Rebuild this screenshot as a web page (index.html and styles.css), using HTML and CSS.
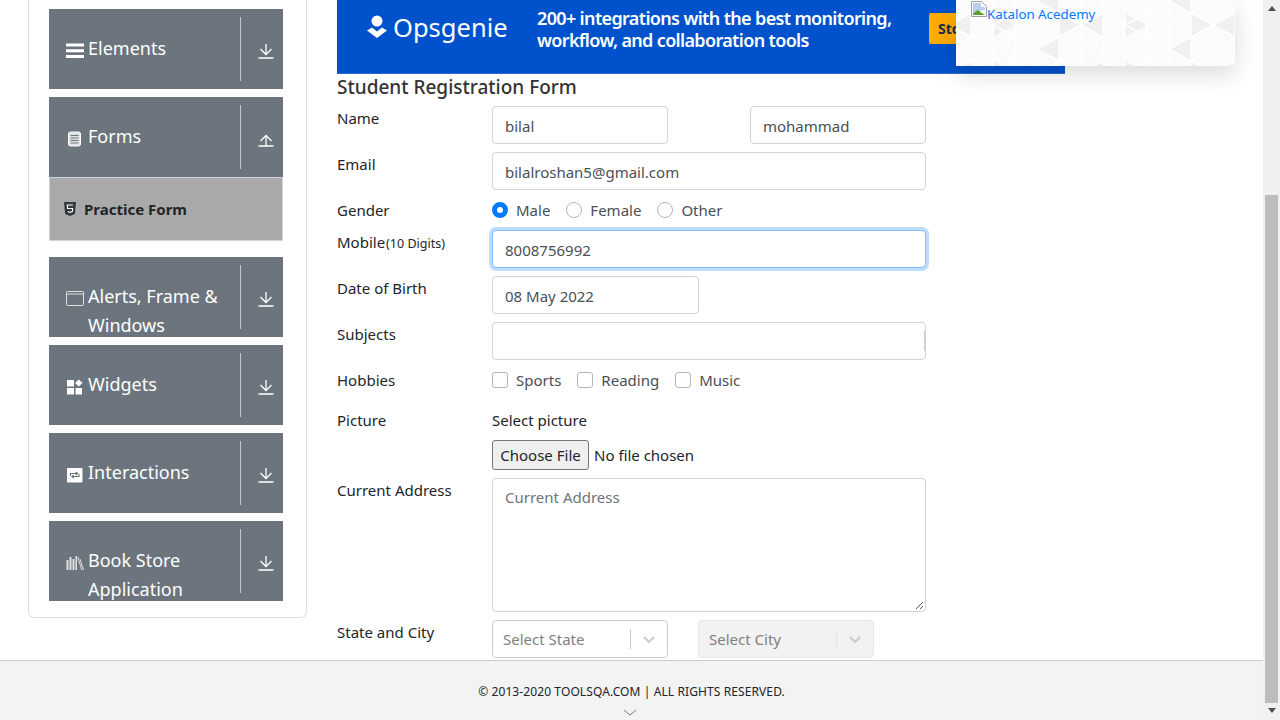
FILE: index.html
```html
<!DOCTYPE html>
<html lang="en">
<head>
  <meta charset="UTF-8">
  <title>Student Registration Form</title>
  <link rel="stylesheet" href="styles.css">
</head>
<body>
  <div class="page">
    <div class="content">
      <aside class="sidebar">
        <div class="menu">
          <div class="group">
            <svg class="group-icon" viewBox="0 0 18 16"><path d="M0 .5h18v3H0zM0 6.200h18v3H0zM0 12h18v3H0z" fill="#fff"/></svg>
            <span class="group-title">Elements</span>
            <div class="group-toggle"><svg viewBox="0 0 16 16"><path d="M8 1v10.500M2.500 6l5.500 5.500L13.500 6M.5 15h15" fill="none" stroke="#fff" stroke-width="1.300"/></svg></div>
          </div>
          <div class="group">
            <svg class="group-icon" viewBox="0 0 18 16"><rect x="2.500" y="1" width="12" height="14" rx="2" fill="#dfe1e3" stroke="#fff"/><path d="M4.500 4.500h8M4.500 7h8M4.500 9.500h8M4.500 12h8" stroke="#6c757d"/></svg>
            <span class="group-title">Forms</span>
            <div class="group-toggle"><svg viewBox="0 0 16 16"><path d="M8 15V4.500M2.500 10 8 4.500l5.500 5.500M.5 15h15" fill="none" stroke="#fff" stroke-width="1.300"/></svg></div>
          </div>
          <div class="subitem">
            <svg class="subitem-icon" viewBox="0 0 12 14"><path d="M0 0h12l-1.100 12L6 14l-4.900-2z" fill="#343a40"/><path d="M9 3H3.300l.3 3.500h5l-.3 3L6 10.500l-2.200-1" fill="none" stroke="#fff" stroke-width="1.100"/></svg>
            <span>Practice Form</span>
          </div>
          <div class="group group-gap">
            <svg class="group-icon" viewBox="0 0 18 16"><rect x=".5" y=".5" width="17" height="14" rx="1" fill="none" stroke="#dfe1e3"/><path d="M.5 3h17" stroke="#dfe1e3"/></svg>
            <span class="group-title">Alerts, Frame &amp; Windows</span>
            <div class="group-toggle"><svg viewBox="0 0 16 16"><path d="M8 1v10.500M2.500 6l5.500 5.500L13.500 6M.5 15h15" fill="none" stroke="#fff" stroke-width="1.300"/></svg></div>
          </div>
          <div class="group">
            <svg class="group-icon" viewBox="0 0 18 16"><path d="M1 1h7v6.500H1zM1 9h7v6.500H1zM9.500 9H16v6.500H9.500zM12.800 .5l3.700 3.500-3.700 3.500L9 4z" fill="#fff"/></svg>
            <span class="group-title">Widgets</span>
            <div class="group-toggle"><svg viewBox="0 0 16 16"><path d="M8 1v10.500M2.500 6l5.500 5.500L13.500 6M.5 15h15" fill="none" stroke="#fff" stroke-width="1.300"/></svg></div>
          </div>
          <div class="group">
            <svg class="group-icon" viewBox="0 0 18 16"><rect x="1" y="1" width="15.500" height="14.500" rx="1" fill="#fff"/><path d="M4.500 9V6.500h7M9.800 5l1.800 1.500L9.800 8M13 7v2.500H6M7.700 8 6 9.500 7.700 11" fill="none" stroke="#6c757d" stroke-width="1.100"/></svg>
            <span class="group-title">Interactions</span>
            <div class="group-toggle"><svg viewBox="0 0 16 16"><path d="M8 1v10.500M2.500 6l5.500 5.500L13.500 6M.5 15h15" fill="none" stroke="#fff" stroke-width="1.300"/></svg></div>
          </div>
          <div class="group">
            <svg class="group-icon" viewBox="0 0 18 16"><path d="M.5 5h2v10h-2zM3.500 2h2v13h-2zM6.500 4h2v11h-2zM9.500 1h1.500v14H9.500z" fill="#dfe1e3"/><path d="M11.800 2l4 13M14 4l3.500 11" stroke="#dfe1e3"/></svg>
            <span class="group-title">Book Store Application</span>
            <div class="group-toggle"><svg viewBox="0 0 16 16"><path d="M8 1v10.500M2.500 6l5.500 5.500L13.500 6M.5 15h15" fill="none" stroke="#fff" stroke-width="1.300"/></svg></div>
          </div>
        </div>
      </aside>

      <main class="main">
        <div class="ad">
          <div class="ad-logo">
            <svg viewBox="0 0 20 23"><circle cx="10" cy="6" r="5.500" fill="#fff"/><path d="M0 15.500l5-3 5 4 5-4 5 3-10 7.500z" fill="#fff"/></svg>
            <span>Opsgenie</span>
          </div>
          <div class="ad-text">200+ integrations with the best monitoring,<br>workflow, and collaboration tools</div>
          <div class="ad-button">Stop</div>
        </div>

        <h1 class="form-title">Student Registration Form</h1>

        <form class="form">
          <div class="row">
            <label class="row-label">Name</label>
            <div class="field-pair">
              <input class="input" type="text" value="bilal">
              <input class="input" type="text" value="mohammad">
            </div>
          </div>
          <div class="row">
            <label class="row-label">Email</label>
            <input class="input input-full" type="text" value="bilalroshan5@gmail.com">
          </div>
          <div class="row row-options row-gender">
            <label class="row-label">Gender</label>
            <div class="options">
              <span class="option"><span class="radio radio-on"></span>Male</span>
              <span class="option"><span class="radio"></span>Female</span>
              <span class="option"><span class="radio"></span>Other</span>
            </div>
          </div>
          <div class="row">
            <label class="row-label">Mobile<small>(10 Digits)</small></label>
            <input class="input input-full input-focus" type="text" value="8008756992">
          </div>
          <div class="row">
            <label class="row-label">Date of Birth</label>
            <input class="input input-date" type="text" value="08 May 2022">
          </div>
          <div class="row">
            <label class="row-label">Subjects</label>
            <div class="input input-full input-subjects"></div>
          </div>
          <div class="row row-options row-hobbies">
            <label class="row-label">Hobbies</label>
            <div class="options">
              <span class="option"><span class="check"></span>Sports</span>
              <span class="option"><span class="check"></span>Reading</span>
              <span class="option"><span class="check"></span>Music</span>
            </div>
          </div>
          <div class="row row-picture">
            <label class="row-label">Picture</label>
            <div class="picture">
              <div class="picture-label">Select picture</div>
              <div class="file"><span class="file-button">Choose File</span>No file chosen</div>
            </div>
          </div>
          <div class="row">
            <label class="row-label">Current Address</label>
            <div class="textarea">Current Address
              <svg class="resize-grip" viewBox="0 0 10 10"><path d="M9 2 2 9M9 6 6 9" stroke="#555" fill="none"/></svg>
            </div>
          </div>
          <div class="row">
            <label class="row-label">State and City</label>
            <div class="selects">
              <div class="select"><span class="select-value">Select State</span><span class="select-arrow"><svg viewBox="0 0 20 20"><path d="M5 8l5 5 5-5" fill="none" stroke="#ccc" stroke-width="2"/></svg></span></div>
              <div class="select select-off"><span class="select-value">Select City</span><span class="select-arrow"><svg viewBox="0 0 20 20"><path d="M5 8l5 5 5-5" fill="none" stroke="#ccc" stroke-width="2"/></svg></span></div>
            </div>
          </div>
        </form>

        <div class="promo">
          <svg class="promo-bg" width="279" height="66">
            <defs>
              <pattern id="tri-grey" width="132" height="48" patternUnits="userSpaceOnUse" x="-7" y="-11">
                <path d="M0 36 22 24v24zM66 36 44 24v24zM88 12 110 0v24zM132 36 110 24v24z" fill="#f0f0f0"/>
              </pattern>
              <pattern id="tri-line" width="44" height="48" patternUnits="userSpaceOnUse" x="-7" y="-11">
                <path d="M0 0v48M22 0v48M44 0v48M0 12 22 0M0 12l22 12M0 36l22-12M0 36l22 12M22 0l22 12M22 24l22-12M22 24l22 12M22 48l22-12" fill="none" stroke="#fff" stroke-width="1.500"/>
              </pattern>
            </defs>
            <rect width="279" height="66" fill="url(#tri-grey)"/>
            <rect width="279" height="66" fill="url(#tri-line)"/>
          </svg>
          <svg class="broken-img" viewBox="0 0 16 16"><path d="M.5.500h10l5 5v10H.5z" fill="#fff" stroke="#a0a0a0"/><path d="M2 2h8v4h4v3l-6 1-6 3z" fill="#b9cdf0"/><path d="M2 14v-1.500l5-3.500 3 2.500 4 2.500z" fill="#5aa02c"/></svg>
          <a class="promo-link" href="#">Katalon Acedemy</a>
        </div>
      </main>
    </div>

    <footer class="footer">
      <span>© 2013-2020 TOOLSQA.COM | ALL RIGHTS RESERVED.</span>
      <svg class="footer-arrow" viewBox="0 0 14 7"><path d="M1 1l6 5 6-5" fill="none" stroke="#777" stroke-width="1"/></svg>
    </footer>
  </div>

  <div class="scrollbar">
    <span class="scroll-up"></span>
    <div class="scroll-thumb"></div>
    <span class="scroll-down"></span>
  </div>
</body>
</html>
```

FILE: styles.css
```css
:root {
  --grey: #6c757d;
  --line: #ced4da;
  --text: #212529;
  --input-text: #495057;
}

* {
  box-sizing: border-box;
}

html, body {
  height: 720px;
  overflow: hidden;
}

body {
  margin: 0;
  display: flex;
  font-family: "Noto Sans", "Open Sans", sans-serif;
  font-size: 15px;
  line-height: 24px;
  color: var(--text);
  background: #fff;
}

.page {
  flex: 1;
  display: flex;
  flex-direction: column;
  min-width: 0;
}

.content {
  height: 660px;
  display: flex;
  overflow: hidden;
}

/* sidebar */
.sidebar {
  width: 279px;
  height: 618px;
  margin-left: 28px;
  padding: 9px 20px 0;
  border: 1px solid #dfdfdf;
  border-top: none;
  border-radius: 0 0 6px 6px;
  flex-shrink: 0;
}

.menu {
  width: 234px;
}

.group {
  height: 80px;
  margin-bottom: 8px;
  padding: 25px 43px 0 17px;
  display: flex;
  align-items: flex-start;
  background: var(--grey);
  color: #fff;
  font-size: 18px;
  line-height: 29px;
  overflow: hidden;
  position: relative;
}

.group-icon {
  width: 18px;
  height: 16px;
  margin-top: 9px;
  margin-right: 4px;
  flex-shrink: 0;
}

.group-title {
  flex: 1;
}

.group-toggle {
  position: absolute;
  top: 8px;
  right: 0;
  width: 43px;
  height: 64px;
  border-left: 1px solid #c4c7ca;
  display: flex;
  align-items: center;
  justify-content: center;
}

.group-toggle svg {
  width: 16px;
  height: 16px;
  margin: 3px 0 0 7px;
}

.subitem {
  height: 64px;
  margin-top: -8px;
  margin-bottom: 16px;
  padding-left: 14px;
  display: flex;
  align-items: center;
  background: #a9a9a9;
  border: 1px solid #ced4da;
  font-size: 15px;
  font-weight: 700;
  color: #212529;
}

.subitem-icon {
  width: 12px;
  height: 14px;
  margin-right: 8px;
}

/* main column */
.main {
  width: 928px;
  margin-left: 30px;
  position: relative;
}

.ad {
  width: 728px;
  height: 74px;
  padding: 0 0 16px 30px;
  display: flex;
  align-items: center;
  background: #0052cc;
  border-bottom: 1px solid #2a6bd0;
  color: #fff;
}

.ad-logo {
  width: 170px;
  margin-bottom: 4px;
  display: flex;
  align-items: center;
  gap: 6px;
  font-size: 25.500px;
  line-height: 30px;
}

.ad-logo svg {
  width: 20px;
  height: 23px;
}

.ad-text {
  font-size: 18px;
  line-height: 22px;
  font-weight: 600;
  letter-spacing: -.65px;
  width: 392px;
}

.ad-button {
  height: 31px;
  width: 70px;
  padding-left: 9px;
  background: #ffab00;
  border-radius: 2px;
  color: #172b4d;
  font-size: 14px;
  line-height: 31px;
  font-weight: 700;
}

.form-title {
  margin: 0 0 6px;
  font-size: 19px;
  line-height: 26px;
  font-weight: 500;
  color: #333;
}

.form {
  width: 589px;
}

.row {
  display: flex;
  margin-bottom: 8px;
}

.row-label {
  width: 155px;
  flex-shrink: 0;
  font-size: 15px;
  line-height: 24px;
}

.row-label small {
  font-size: 12.500px;
  margin-left: 1px;
}

.row-options {
  height: 24px;
}

.row-gender {
  margin-bottom: 8px;
}

.row-hobbies {
  margin-top: 8px;
  margin-bottom: 16px;
}

.field-pair {
  width: 434px;
  display: flex;
  justify-content: space-between;
}

.input {
  width: 176px;
  height: 38px;
  padding: 7px 12px 5px;
  border: 1px solid var(--line);
  border-radius: 4px;
  font: inherit;
  color: var(--input-text);
  background: #fff;
}

.input-full {
  width: 434px;
}

.input-date {
  width: 207px;
}

.input-focus {
  border-color: #80bdff;
  box-shadow: 0 0 0 3px rgba(0, 123, 255, .25);
  outline: none;
}

.input-subjects {
  position: relative;
}

/* little thick part on the right edge of the subjects box */
.input-subjects::after {
  content: "";
  position: absolute;
  top: 8px;
  right: 0;
  width: 1px;
  height: 20px;
  background: #ccc;
}

.options {
  display: flex;
  gap: 16px;
  color: var(--input-text);
}

.option {
  display: flex;
  align-items: center;
}

.radio, .check {
  width: 16px;
  height: 16px;
  margin-right: 8px;
  border: 1px solid #adb5bd;
  background: #fff;
  flex-shrink: 0;
}

.radio {
  border-radius: 50%;
}

.radio-on {
  border: 5px solid #007bff;
}

.check {
  border-radius: 3px;
}

.picture-label {
  height: 32px;
  line-height: 24px;
}

.file {
  display: flex;
  align-items: center;
  height: 30px;
  font-size: 15px;
}

.file-button {
  height: 30px;
  width: 97px;
  margin-right: 5px;
  text-align: center;
  background: #efefef;
  border: 1px solid #767676;
  border-radius: 3px;
  line-height: 28px;
}

.textarea {
  width: 434px;
  height: 134px;
  padding: 6px 12px;
  border: 1px solid var(--line);
  border-radius: 4px;
  color: #6c757d;
  position: relative;
}

.resize-grip {
  position: absolute;
  right: 1px;
  bottom: 1px;
  width: 10px;
  height: 10px;
}

.selects {
  display: flex;
  gap: 30px;
}

.select {
  width: 176px;
  height: 38px;
  padding-left: 10px;
  display: flex;
  align-items: center;
  justify-content: space-between;
  border: 1px solid #ccc;
  border-radius: 4px;
  color: #808080;
}

.select-off {
  background: #f2f2f2;
  border-color: #e6e6e6;
}

.select-arrow {
  width: 37px;
  height: 20px;
  border-left: 1px solid #ccc;
  display: flex;
  align-items: center;
  justify-content: center;
}

.select-off .select-arrow {
  border-left-color: #e6e6e6;
}

.select-arrow svg {
  width: 20px;
  height: 20px;
}

.promo {
  position: absolute;
  top: 0;
  left: 619px;
  width: 279px;
  height: 66px;
  padding: 1px 15px;
  display: flex;
  align-items: flex-start;
  background: #fbfbfb;
  box-shadow: 0 8px 24px rgba(0, 0, 0, .15);
}

.promo-bg {
  position: absolute;
  top: 0;
  left: 0;
}

.broken-img {
  position: relative;
  width: 16px;
  height: 16px;
  flex-shrink: 0;
}

.promo-link {
  position: relative;
  color: #007bff;
  font-size: 13.300px;
  line-height: 20px;
  margin-top: 3px;
  text-decoration: none;
}

/* footer */
.footer {
  height: 60px;
  padding-top: 21px;
  display: flex;
  flex-direction: column;
  align-items: center;
  background: #f3f3f3;
  border-top: 1px solid #ccc;
  font-size: 12px;
  line-height: 20px;
  letter-spacing: .1px;
}

.footer-arrow {
  width: 14px;
  height: 7px;
  margin-top: 7px;
  margin-left: -3px;
}

/* fake window scrollbar */
.scrollbar {
  width: 17px;
  height: 720px;
  flex-shrink: 0;
  background: #f0f0f0;
  display: flex;
  flex-direction: column;
  align-items: center;
}

.scroll-up {
  margin-top: 6px;
  border: 4px solid transparent;
  border-top: none;
  border-bottom: 5px solid #505050;
}

.scroll-thumb {
  width: 13px;
  height: 508px;
  margin-top: 184px;
  background: #bdbdbd;
}

.scroll-down {
  margin-top: 5px;
  border: 4px solid transparent;
  border-bottom: none;
  border-top: 5px solid #505050;
}
```
